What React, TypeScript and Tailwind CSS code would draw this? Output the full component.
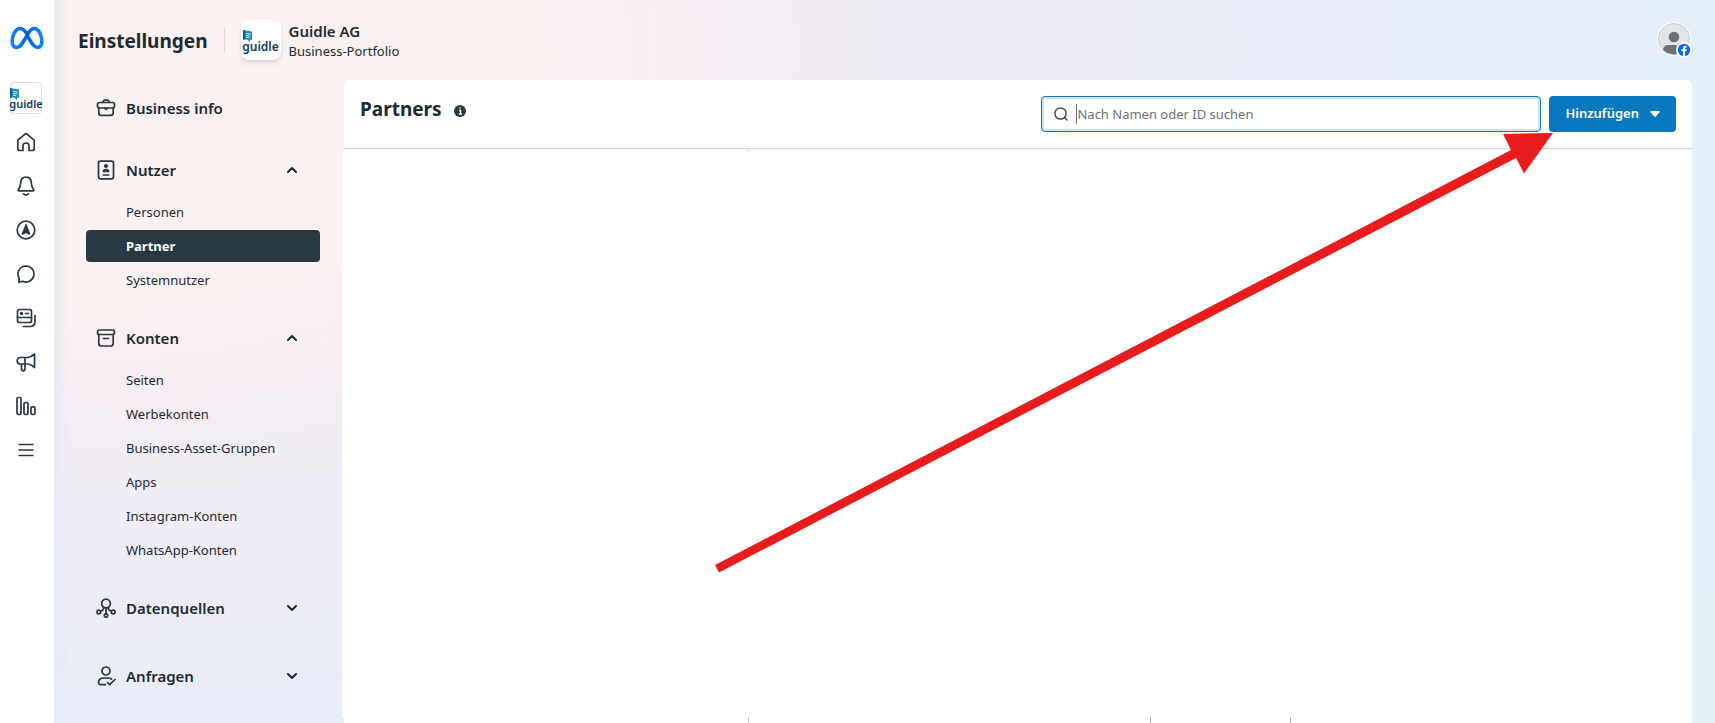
import React from "react";

const INK = "#1c2b33";

function Svg({ children, size = 20, className = "" }: { children: React.ReactNode; size?: number; className?: string }) {
  return (
    <svg
      width={size}
      height={size}
      viewBox="0 0 20 20"
      fill="none"
      stroke="#283943"
      strokeWidth="1.7"
      strokeLinecap="round"
      strokeLinejoin="round"
      className={className}
      aria-hidden="true"
    >
      {children}
    </svg>
  );
}

function MetaLogo() {
  return (
    <svg width="34" height="24" viewBox="0 0 36 24" fill="none" aria-hidden="true">
      <defs>
        <linearGradient id="meta" x1="0" y1="0" x2="1" y2="0">
          <stop offset="0" stopColor="#0a84ff" />
          <stop offset="0.5" stopColor="#0064e0" />
          <stop offset="1" stopColor="#0a84ff" />
        </linearGradient>
      </defs>
      <path
        d="M18 7.500C15.600 3.800 13.300 2 10.700 2C5.700 2 2.300 9 2.300 15.200C2.300 19.500 4.100 22 7 22C10.300 22 12.200 19.500 15.500 13.500L18 9.500C20.500 4.500 22.500 2 25.500 2C30.400 2 33.700 9 33.700 15.200C33.700 19.500 32 22 29.200 22C25.800 22 23.500 19 20 12.500L18 9Z"
        stroke="url(#meta)"
        strokeWidth="3.800"
        strokeLinejoin="round"
      />
    </svg>
  );
}

function GuidleMark({ large = false }: { large?: boolean }) {
  return (
    <span className="flex flex-col">
      <svg width="11" height="12" viewBox="0 0 11 12" aria-hidden="true">
        <path d="M1 0L10 1.500V10L8 9.500L8 12L5 9.500L1 9.500Z" fill="#1b8fc4" />
        <path d="M1 0L3 0.400V9.500H1Z" fill="#0d5f9a" />
        <path d="M4 3.500L8.500 4M4 5.500L8.500 6M4 7.300L7 7.700" stroke="#d9f0fa" strokeWidth="0.900" />
      </svg>
      <span
        className={
          large
            ? "text-[12px] leading-[9px] font-semibold text-[#123a66]"
            : "text-[11px] leading-[8px] font-semibold text-[#123a66]"
        }
      >
        guidle
      </span>
    </span>
  );
}

const railItems: { label: string; icon: React.ReactNode }[] = [
  { label: "Startseite", icon: <path d="M1.800 8.200L8.700 2.300Q10 1.200 11.300 2.300L18.200 8.200V16.500Q18.200 18.500 16.200 18.500H13V13.500Q13 11 10 11Q7 11 7 13.500V18.500H3.800Q1.800 18.500 1.800 16.500Z" /> },
  {
    label: "Benachrichtigungen",
    icon: (
      <>
        <path d="M10 1.200C6.700 1.200 4.800 3.600 4.700 6.800C4.600 10 4.100 11.400 2.300 13.700Q1.700 14.800 3 14.800H17Q18.300 14.800 17.700 13.700C15.900 11.400 15.400 10 15.300 6.800C15.200 3.600 13.300 1.200 10 1.200Z" />
        <path d="M7.500 17.800Q10 19.800 12.500 17.800" />
      </>
    ),
  },
  {
    label: "Werbeanzeigenmanager",
    icon: (
      <>
        <circle cx="10" cy="10" r="8.800" />
        <path d="M10 5L13.500 14L10 12L6.500 14Z" fill="#283943" />
      </>
    ),
  },
  { label: "Inbox", icon: <path d="M10 2A8 8 0 1 1 6.500 17.200L2.800 18.300L3.200 14.200A8 8 0 0 1 10 2Z" /> },
  {
    label: "Content",
    icon: (
      <>
        <rect x="1.500" y="1.500" width="14" height="13" rx="2" />
        <path d="M1.500 9.500H15.500M9.500 5.500H12.500M7.500 18.500H14Q19 18.500 19 13.500V7.500" />
        <circle cx="5.500" cy="5.500" r="0.900" fill="#283943" />
      </>
    ),
  },
  {
    label: "Werbung",
    icon: (
      <path d="M12 5.500H4.500Q1.200 5.500 1.200 8.700Q1.200 12 4.500 12H12Q15 12.300 18.500 15.500V2Q15 5.200 12 5.500ZM9 5.500V12M5.500 12V16.500Q5.500 18.800 7.300 18.800Q9 18.800 9 16.500V12" />
    ),
  },
  {
    label: "Insights",
    icon: (
      <>
        <rect x="1" y="1.500" width="4" height="17" rx="1.200" />
        <rect x="8" y="6.500" width="4" height="12" rx="1.200" />
        <rect x="15" y="10.800" width="4" height="7.700" rx="1.200" />
      </>
    ),
  },
  { label: "Alle Tools", icon: <path d="M2.500 4.500H17.500M2.500 10H17.500M2.500 15.500H17.500" strokeLinecap="butt" /> },
];

function NavHeading({ icon, label, open }: { icon: React.ReactNode; label: string; open?: boolean }) {
  return (
    <button type="button" className="flex h-10 w-full items-center pr-5 pl-[10px] text-left">
      <Svg>{icon}</Svg>
      <span className="ml-[10px] flex-1 text-[15px] font-semibold">{label}</span>
      {open !== undefined && (
        <svg width="16" height="16" viewBox="0 0 16 16" fill="none" stroke={INK} strokeWidth="2" strokeLinecap="round" strokeLinejoin="round" aria-hidden="true">
          <path d={open ? "M4 10L8 6L12 10" : "M4 6L8 10L12 6"} />
        </svg>
      )}
    </button>
  );
}

function NavLinks({ items, active }: { items: string[]; active?: string }) {
  return (
    <ul className="mt-[6px] flex flex-col gap-[2px]">
      {items.map((item) => (
        <li key={item}>
          <a
            href="#"
            aria-current={item === active ? "page" : undefined}
            className={
              item === active
                ? "flex h-8 items-center rounded bg-[#283943] pt-[2px] pl-10 text-[13px] font-bold text-white"
                : "flex h-8 items-center pt-[2px] pl-10 text-[13px]"
            }
          >
            {item}
          </a>
        </li>
      ))}
    </ul>
  );
}

export default function App() {
  return (
    <div className="flex h-screen overflow-hidden bg-white font-['Noto_Sans',sans-serif] text-[#1c2b33]">
      <nav aria-label="Hauptnavigation" className="flex w-[54px] shrink-0 flex-col items-center pt-[26px]">
        <a href="#" aria-label="Meta">
          <MetaLogo />
        </a>
        <a href="#" aria-label="Guidle" className="mt-8 mr-[2px] flex size-8 items-center justify-center rounded border border-[#dadde1]">
          <GuidleMark />
        </a>
        <ul className="mt-[18px] mr-[2px] flex flex-col gap-6">
          {railItems.map((item) => (
            <li key={item.label}>
              <a href="#" aria-label={item.label} className="block">
                <Svg>{item.icon}</Svg>
              </a>
            </li>
          ))}
        </ul>
      </nav>

      <div className="flex min-w-0 flex-1 flex-col bg-[linear-gradient(to_right,rgb(222_230_246/0.5),rgb(222_230_246/0)_16px),radial-gradient(125%_155%_at_0_7%,#faf1f0_22%,#f9eef2_27%,#f2edf4_36%,#eeecf6_43%,#e9edf7_60%,#e4effa_80%,#e3f1f6_100%)]">
        <header className="flex h-20 shrink-0 items-center pr-[22px] pl-6">
          <h1 className="pt-[2px] text-[19px] font-bold">Einstellungen</h1>
          <span className="ml-4 h-6 w-px bg-[#d5d8de]" />
          <span className="ml-4 flex size-10 items-center justify-center rounded-lg bg-white shadow-md">
            <GuidleMark large />
          </span>
          <div className="ml-2 flex-1 pt-px leading-5">
            <p className="text-[15px] font-semibold">Guidle AG</p>
            <p className="text-[13px]">Business-Portfolio</p>
          </div>
          <button type="button" aria-label="Konto" className="size-9">
            <svg width="36" height="36" viewBox="0 0 36 36" aria-hidden="true">
              <circle cx="17" cy="17" r="17" fill="#fff" />
              <circle cx="17" cy="17" r="15.500" fill="#e2e5e9" stroke="#c8ccd1" />
              <circle cx="17" cy="15" r="5.300" fill="#6d7278" />
              <path d="M6 28Q6.500 23 12 23H22Q27 23 28 28A16 16 0 0 1 6 28Z" fill="#6d7278" />
              <circle cx="27" cy="28" r="8" fill="#fff" />
              <circle cx="27" cy="28" r="6.200" fill="#0866ff" />
              <path d="M26 34V29.300H24.300V27.200H26V26Q26 23.300 29.500 23.800V25.700Q28 25.500 28 26.500V27.200H29.700L29.400 29.300H28V34Z" fill="#fff" />
            </svg>
          </button>
        </header>

        <div className="flex min-h-0 flex-1 pr-[23px]">
          <aside className="w-[288px] shrink-0 overflow-hidden pt-2 pr-[22px] pl-8">
            <NavHeading
              label="Business info"
              icon={
                <>
                  <rect x="1.500" y="4.500" width="17" height="5.500" rx="2" />
                  <path d="M2.800 10V15Q2.800 17.300 5.100 17.300H14.900Q17.200 17.300 17.200 15V10M7 4.300Q7 2.200 9 2.200H11Q13 2.200 13 4.300M8.500 10L10 11.500L11.500 10" />
                </>
              }
            />
            <div className="mt-[22px]">
              <NavHeading
                label="Nutzer"
                open
                icon={
                  <>
                    <rect x="2.500" y="1.200" width="15" height="17.600" rx="2" />
                    <circle cx="10" cy="6" r="1.200" fill="#283943" />
                    <path d="M7.500 11.500Q7.500 9.700 10 9.700Q12.500 9.700 12.500 11.500ZM7.300 15H12.700" />
                  </>
                }
              />
              <NavLinks items={["Personen", "Partner", "Systemnutzer"]} active="Partner" />
            </div>
            <div className="mt-[22px]">
              <NavHeading
                label="Konten"
                open
                icon={
                  <>
                    <rect x="1.500" y="2" width="17" height="4.500" rx="1.800" />
                    <path d="M2.800 6.500V15.500Q2.800 18 5.300 18H14.700Q17.200 18 17.200 15.500V6.500M7.500 10.500H12.500" />
                  </>
                }
              />
              <NavLinks items={["Seiten", "Werbekonten", "Business-Asset-Gruppen", "Apps", "Instagram-Konten", "WhatsApp-Konten"]} />
            </div>
            <div className="mt-[22px]">
              <NavHeading
                label="Datenquellen"
                open={false}
                icon={
                  <>
                    <circle cx="10" cy="5.500" r="4.300" />
                    <circle cx="2.800" cy="14" r="1.900" />
                    <circle cx="10" cy="17.500" r="1.700" />
                    <circle cx="17.200" cy="14" r="1.900" />
                    <path d="M10 10V15.500M7.500 9.500V11Q7.500 12 5 13M12.500 9.500V11Q12.500 12 15 13" />
                  </>
                }
              />
            </div>
            <div className="mt-7">
              <NavHeading
                label="Anfragen"
                open={false}
                icon={
                  <>
                    <circle cx="10" cy="5" r="4" />
                    <path d="M9.500 18.700H5Q2.500 18.700 2.500 16.500Q2.500 12 8 12H12Q14 12 15.500 13M11.500 16.500L13.700 18.700L19 13.500" />
                  </>
                }
              />
            </div>
          </aside>

          <main className="flex min-w-0 flex-1 flex-col">
            <div className="ml-[2px] flex shrink-0 items-start justify-between rounded-t-md border-b border-[#d6d8da] bg-white p-4">
              <div className="flex items-center gap-3">
                <h2 className="text-[19px] leading-[26px] font-bold">Partners</h2>
                <svg width="12" height="12" viewBox="0 0 12 12" className="mt-1" aria-hidden="true">
                  <circle cx="6" cy="6" r="6" fill="#283943" />
                  <path d="M5 5.500H6.500V9M4.800 9H8M6 2.300V3.700" stroke="#fff" strokeWidth="1.300" />
                </svg>
              </div>
              <div className="flex gap-2">
                <label className="flex h-9 w-[500px] items-center gap-2 rounded border border-[#0a78be] bg-white px-3 shadow-[inset_0_0_0_2px_#cfe4f1]">
                  <svg width="14" height="14" viewBox="0 0 14 14" fill="none" stroke="#444c52" strokeWidth="1.500" strokeLinecap="round" aria-hidden="true">
                    <circle cx="6.500" cy="6.500" r="5.600" />
                    <path d="M10.700 10.700L13 13" />
                  </svg>
                  <span className="h-5 w-px bg-[#6b7378]" />
                  <input type="search" aria-label="Suchen" placeholder="Nach Namen oder ID suchen" className="-ml-2 min-w-0 flex-1 pt-[2px] text-[13px] outline-none placeholder:text-[#6b7378]" />
                </label>
                <button type="button" className="flex h-9 items-center gap-[11px] rounded bg-[#0a78be] px-4 text-[13px] font-semibold text-white">
                  Hinzufügen
                  <svg width="10" height="6" viewBox="0 0 10 6" aria-hidden="true">
                    <path d="M1 0H9Q10.300 0.200 9.500 1.200L5.700 5.500Q5 6.200 4.300 5.500L0.500 1.200Q-0.300 0.200 1 0Z" fill="#fff" />
                  </svg>
                </button>
              </div>
            </div>
            <div className="ml-[2px] flex h-[2px] shrink-0 bg-white">
              <span className="w-[405px] border-r border-[#d6d8da]" />
              <span className="flex-1 bg-[#f5f6f7]" />
            </div>
            <div className="flex-1 bg-white" />
            <div className="ml-[2px] flex h-[6px] shrink-0 bg-white">
              <span className="w-[405px] border-r border-[#c5cace]" />
              <span className="w-[402px] border-r border-[#a9b4bd]" />
              <span className="w-[140px] border-r border-[#a9b4bd]" />
            </div>
          </main>
        </div>
      </div>

      <svg width="840" height="442" viewBox="0 0 840 442" className="pointer-events-none absolute top-[132px] left-[714px]" aria-hidden="true">
        <path d="M1 433L797 18L789 2L839 1L810 41.500L802 26L5 440.500Z" fill="#e81c1c" />
      </svg>
    </div>
  );
}
